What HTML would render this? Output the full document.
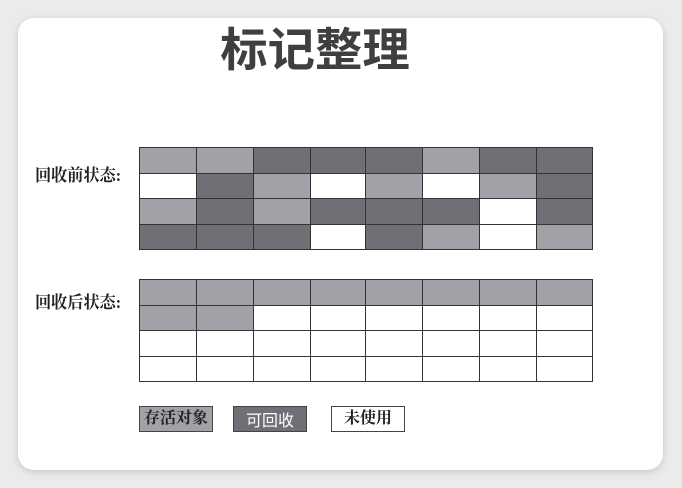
<!DOCTYPE html>
<html><head><meta charset="utf-8"><style>
body{margin:0;width:682px;height:488px;background:#ebebeb;position:relative;overflow:hidden;font-family:"Liberation Serif","Noto Serif CJK SC",serif}
.card{position:absolute;left:18px;top:18px;width:645px;height:452px;background:#fff;border-radius:16px;box-shadow:0 2px 8px rgba(0,0,0,.15)}
.t{position:absolute;left:190px;top:14px;width:250px;text-align:center;font:bold 46px "Noto Sans CJK SC",sans-serif;color:#3f3f41;letter-spacing:0px;transform:scaleX(1.03)}
.lab{position:absolute;left:35px;font-weight:bold;font-size:17px;color:#222;transform:scaleX(.95);transform-origin:left}
table{position:absolute;left:139px;border-collapse:collapse}
td{border:1px solid #333;height:24.6px;padding:0}
.L{background:#a0a2a8}.D{background:#6f7075}.W{background:#fff}
.lg{position:absolute;top:406px;width:72px;height:24px;border:1px solid #444;font-size:16px;text-align:center;line-height:24px;font-weight:bold}
</style></head><body>
<div class="card"></div>
<div class="t">标记整理</div>
<div class="lab" style="top:161px">回收前状态:</div>
<div class="lab" style="top:288px">回收后状态:</div>
<table style="top:147px">
<colgroup><col width="57"><col width="57"><col width="57"><col width="55"><col width="57"><col width="57"><col width="57"><col width="56"></colgroup>
<tr><td class="L"></td><td class="L"></td><td class="D"></td><td class="D"></td><td class="D"></td><td class="L"></td><td class="D"></td><td class="D"></td></tr>
<tr><td class="W"></td><td class="D"></td><td class="L"></td><td class="W"></td><td class="L"></td><td class="W"></td><td class="L"></td><td class="D"></td></tr>
<tr><td class="L"></td><td class="D"></td><td class="L"></td><td class="D"></td><td class="D"></td><td class="D"></td><td class="W"></td><td class="D"></td></tr>
<tr><td class="D"></td><td class="D"></td><td class="D"></td><td class="W"></td><td class="D"></td><td class="L"></td><td class="W"></td><td class="L"></td></tr>
</table>
<table style="top:279px">
<colgroup><col width="57"><col width="57"><col width="57"><col width="55"><col width="57"><col width="57"><col width="57"><col width="56"></colgroup>
<tr><td class="L"></td><td class="L"></td><td class="L"></td><td class="L"></td><td class="L"></td><td class="L"></td><td class="L"></td><td class="L"></td></tr>
<tr><td class="L"></td><td class="L"></td><td></td><td></td><td></td><td></td><td></td><td></td></tr>
<tr><td></td><td></td><td></td><td></td><td></td><td></td><td></td><td></td></tr>
<tr><td></td><td></td><td></td><td></td><td></td><td></td><td></td><td></td></tr>
</table>
<div class="lg L" style="left:139px;color:#222">存活对象</div>
<div class="lg D" style="left:233px;color:#fff;font-family:'Noto Sans CJK SC',sans-serif;font-weight:normal">可回收</div>
<div class="lg W" style="left:331px;color:#222">未使用</div>
</body></html>
